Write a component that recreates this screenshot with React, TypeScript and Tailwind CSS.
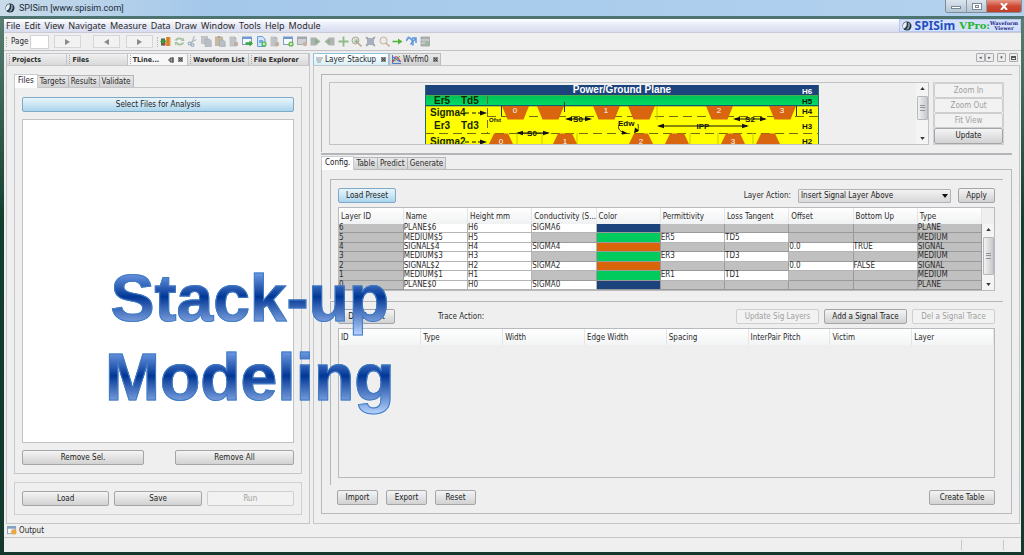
import React from 'react';
import clsx from 'clsx';

const NAVY = 'bg-[#1c437c]';
const GREEN = 'bg-[#00cb5c]';
const ORANGE = 'bg-[#d9650a]';

type LayerRow = {
  cells: (string | null)[];
  color: string;
};

const layers: LayerRow[] = [
  { cells: ['6', 'PLANE$6', 'H6', 'SIGMA6', '', null, null, null, null, 'PLANE'], color: NAVY },
  { cells: ['5', 'MEDIUM$5', 'H5', null, '', 'ER5', 'TD5', null, null, 'MEDIUM'], color: GREEN },
  { cells: ['4', 'SIGNAL$4', 'H4', 'SIGMA4', '', null, null, '0.0', 'TRUE', 'SIGNAL'], color: ORANGE },
  { cells: ['3', 'MEDIUM$3', 'H3', null, '', 'ER3', 'TD3', null, null, 'MEDIUM'], color: GREEN },
  { cells: ['2', 'SIGNAL$2', 'H2', 'SIGMA2', '', null, null, '0.0', 'FALSE', 'SIGNAL'], color: ORANGE },
  { cells: ['1', 'MEDIUM$1', 'H1', null, '', 'ER1', 'TD1', null, null, 'MEDIUM'], color: GREEN },
  { cells: ['0', 'PLANE$0', 'H0', 'SIGMA0', '', null, null, null, null, 'PLANE'], color: NAVY },
];

const layerHeads = ['Layer ID', 'Name', 'Height mm', 'Conductivity (S...', 'Color', 'Permittivity', 'Loss Tangent', 'Offset', 'Bottom Up', 'Type'];
const traceHeads = ['ID', 'Type', 'Width', 'Edge Width', 'Spacing', 'InterPair Pitch', 'Victim', 'Layer'];
const menus = ['File', 'Edit', 'View', 'Navigate', 'Measure', 'Data', 'Draw', 'Window', 'Tools', 'Help', 'Module'];

function Btn({ children, className, disabled, tone = 'gray' }: { children: React.ReactNode; className?: string; disabled?: boolean; tone?: 'gray' | 'blue' }) {
  return (
    <button
      type="button"
      disabled={disabled}
      className={clsx(
        'flex h-[15px] items-center justify-center whitespace-nowrap rounded-[2px] border',
        disabled && 'border-[#cfcfcf] bg-[#f2f2f2] text-[#a0a0a0]',
        !disabled && tone === 'gray' && 'border-[#a3a5a8] bg-gradient-to-b from-[#f4f4f4] to-[#d2d2d2] text-[#222]',
        !disabled && tone === 'blue' && 'border-[#7fa9c6] bg-gradient-to-b from-[#e9f5fb] via-[#cbe6f4] to-[#a9d5ec] text-[#222]',
        className,
      )}
    >
      {children}
    </button>
  );
}

function Logo({ className }: { className?: string }) {
  return (
    <svg viewBox="0 0 12 12" className={className} aria-hidden="true">
      <circle cx="6" cy="6" r="5.4" fill="#26333f" />
      <path d="M5.4 1.2A5 5 0 0 0 2 9.2C4.6 8 6.6 5 5.4 1.2Z" fill="#e6edf2" />
      <path d="M7 1.2c1.2 3.6.2 7-2.8 9.200A5 5 0 0 0 7 1.200Z" fill="#5a80a8" />
      <path d="M8.200 2.400C9 5 8.200 8 6.600 10" stroke="#c6d4e0" strokeWidth=".8" fill="none" />
    </svg>
  );
}

function Icon({ children }: { children: React.ReactNode }) {
  return (
    <button type="button" className="size-[11px]">
      <svg viewBox="0 0 11 11" className="block size-[11px]" aria-hidden="true">{children}</svg>
    </button>
  );
}

const windowShape = (
  <>
    <rect x=".5" y="1" width="9" height="7.500" fill="#f6fafd" stroke="#7d9cc0" />
    <rect x=".5" y="1" width="9" height="2" fill="#6c9ad2" />
  </>
);

const grayDoc = (
  <>
    <path d="M1.500 .5h5l2 2v8h-7Z" fill="#bfc3c8" />
    <path d="M6.500 .5l2 2h-2Z" fill="#9ea4ab" />
    <circle cx="8" cy="8" r="2.200" fill="#c3ada0" />
  </>
);

function ToolIcons() {
  return (
    <div className="flex w-[271px] items-center justify-between">
      <Icon>
        <rect x="6" y="1" width="4.500" height="9" fill="#e09a3c" />
        <rect x="7.500" y="1" width="1" height="9" fill="#b86a28" />
        <rect x="1" y="2.500" width="4" height="7" fill="#5a5f55" />
        <path d="M0 5.500l4-3v2h2v2H4v2Z" fill="#3c9a3c" />
        <rect x="3.500" y="7" width="2" height="2.500" fill="#c83c28" />
      </Icon>
      <Icon>
        <path d="M1.500 4.500C3 2 6.500 2 8 3.500" stroke="#a4c4a0" strokeWidth="1.800" fill="none" />
        <path d="M7 5l3.500 0-1-3.500Z" fill="#a4c4a0" />
        <path d="M9.500 6.500C8 9 4.500 9 3 7.500" stroke="#a4c4a0" strokeWidth="1.800" fill="none" />
        <path d="M4 6H.5l1 3.500Z" fill="#a4c4a0" />
      </Icon>
      <Icon>
        <path d="M7.500 0L4.500 7M9.500 3.500L3 7" stroke="#b4bcc4" strokeWidth="1.300" fill="none" />
        <circle cx="2.500" cy="7.500" r="1.400" fill="none" stroke="#9cb0c4" strokeWidth="1.200" />
        <circle cx="5.500" cy="9" r="1.400" fill="none" stroke="#9cb0c4" strokeWidth="1.200" />
      </Icon>
      <Icon>
        <rect x=".5" y=".5" width="6" height="7" fill="#c3c7cc" stroke="#a9aeb4" strokeWidth=".6" />
        <path d="M4 3h4.500l1.800 1.800v5.700H4Z" fill="#b9bfc8" stroke="#9fa6b0" strokeWidth=".6" />
      </Icon>
      <Icon>
        <rect x=".5" y="1" width="7" height="8.500" fill="#c9b79e" stroke="#b5a58e" strokeWidth=".6" />
        <rect x="2.500" y="0" width="3" height="1.800" fill="#a5a5a5" />
        <path d="M4.500 4h4l1.800 1.800v4.700H4.500Z" fill="#b9bfc8" stroke="#9fa6b0" strokeWidth=".6" />
      </Icon>
      <Icon>{grayDoc}</Icon>
      <Icon>
        {windowShape}
        <path d="M3.500 6.300h4V4.500l3.500 3-3.500 3V8.800h-4Z" fill="#3aa63a" />
      </Icon>
      <Icon>
        <path d="M1.500 .5h5l2.500 2.500v7.500H1.500Z" fill="#cfe4fa" stroke="#5b93d8" strokeWidth=".9" />
        <rect x="3" y="4" width="4" height="3" fill="#78aee8" />
        <circle cx="8" cy="8" r="2.600" fill="#45b045" />
        <path d="M8 6.500v3M6.500 8h3" stroke="#fff" strokeWidth=".9" />
      </Icon>
      <Icon>{grayDoc}</Icon>
      <Icon>
        {windowShape}
        <circle cx="8" cy="8" r="2.600" fill="#56b23c" />
        <path d="M8 6.500v3M6.500 8h3" stroke="#fff" strokeWidth=".9" />
      </Icon>
      <Icon>
        <rect x=".5" y="1" width="9" height="7.500" fill="#ced0d3" stroke="#a7aab0" />
        <rect x=".5" y="1" width="9" height="2" fill="#a3a8b0" />
        <circle cx="8" cy="8" r="2.200" fill="#c8b4a4" />
      </Icon>
      <Icon>
        <path d="M.5 1.500H6l4.500 4L6 9.500H.5Z" fill="#aab4ac" />
        <path d="M5 3l4 2.500L5 8Z" fill="#88b088" />
      </Icon>
      <Icon>
        <path d="M10.500 1.500H5l-4.500 4 4.500 4h5.500Z" fill="#b0b4b4" />
        <path d="M6 3L2 5.500 6 8Z" fill="#90b090" />
      </Icon>
      <Icon>
        <path d="M5.500 .5v10M.5 5.500h10" stroke="#8fbc8c" strokeWidth="1.800" />
      </Icon>
      <Icon>
        <circle cx="4.500" cy="4.500" r="3.500" fill="#d8e0d8" stroke="#b0a894" />
        <path d="M7 7l3.500 3.500" stroke="#c8a88c" strokeWidth="1.600" />
        <path d="M5.500 3.500v4M3.500 5.500h4" stroke="#8fb48c" strokeWidth="1.400" />
      </Icon>
      <Icon>
        <rect x="2" y="2" width="7" height="7" fill="#a7b0bc" />
        <path d="M.5 .5l3 1-2 2ZM10.500 .5l-3 1 2 2ZM.5 10.500l3-1-2-2ZM10.500 10.500l-3-1 2-2Z" fill="#9aa2ae" />
      </Icon>
      <Icon>
        <circle cx="4.500" cy="4.500" r="3.500" fill="#ecebe8" stroke="#c0b2a4" />
        <path d="M7 7l3.500 3.500" stroke="#cfae96" strokeWidth="1.600" />
      </Icon>
      <Icon>
        <path d="M.5 4.700h5.500V2.500l4.500 3-4.500 3V6.300H.5Z" fill="#4fb43c" />
      </Icon>
      <Icon>
        <path d="M0 5L2.500 1.500 6 3.500 7 9.500" stroke="#6f9fde" strokeWidth="2" fill="none" />
        <path d="M10 2L4.500 8.500M6 2h4v5" stroke="#5f96dc" strokeWidth="1.500" fill="none" />
      </Icon>
      <Icon>
        <rect x="1" y="1" width="8.500" height="9" fill="#b0b3b6" stroke="#94989c" strokeWidth=".7" />
        <path d="M1 4h8.500M1 7h4" stroke="#e4e4e4" strokeWidth=".8" />
        <circle cx="7.500" cy="7.500" r="2.300" fill="#9cb89a" />
      </Icon>
    </div>
  );
}

function Grip() {
  return <span className="mr-[2px] h-[9px] w-0 border-l border-dotted border-[#a8a8a8]" />;
}

function Cross() {
  return (
    <svg viewBox="0 0 5 5" className="size-[5px] shrink-0" aria-hidden="true">
      <rect width="5" height="5" fill="#8a8a8a" />
      <path d="M1 1l3 3M4 1L1 4" stroke="#444" strokeWidth="1" />
    </svg>
  );
}

function SubTabs({ items, className }: { items: string[]; className?: string }) {
  return (
    <div className={clsx('relative z-10 -mb-px flex items-end', className)} role="tablist">
      {items.map((t, i) => (
        <button
          key={t}
          type="button"
          role="tab"
          aria-selected={i === 0}
          className={clsx(
            'whitespace-nowrap border',
            i === 0
              ? 'h-[14px] border-b-0 border-[#c9ccd2] bg-white px-[3px] pb-px text-[#222]'
              : 'mb-px h-[12px] border-b-0 border-l-0 border-[#b4b6ba] bg-gradient-to-b from-[#e8e8e8] to-[#d3d3d3] px-[2px] leading-[11px]',
          )}
        >
          {t}
        </button>
      ))}
    </div>
  );
}

function LeftPanel() {
  const tab = 'flex h-full min-w-0 flex-1 items-center whitespace-nowrap border-r border-[#c2c4c8] bg-gradient-to-b from-[#f0f0f0] to-[#d9d9d9] pl-[2px] text-[7px] font-bold';
  return (
    <section className="flex w-[304px] shrink-0 flex-col border border-[#c3c6cb]">
      <div className="flex h-[12px] shrink-0 border-b border-[#c3c6cb]" role="tablist">
        <button type="button" role="tab" className={tab}><Grip />Projects</button>
        <button type="button" role="tab" className={tab}><Grip />Files</button>
        <div className="flex min-w-0 flex-1 items-center border-r border-[#c2c4c8] bg-[#f7f7f7] pl-[2px] text-[7px] font-bold">
          <Grip />
          <button type="button" role="tab" className="mr-auto">TLine...</button>
          <svg viewBox="0 0 6 6" className="mr-1 size-[6px]" aria-hidden="true">
            <path d="M2 1h3v4H2ZM0 3h2M5 0v6" stroke="#555" fill="#999" />
          </svg>
          <span className="mr-1"><Cross /></span>
        </div>
        <button type="button" role="tab" className={tab}><Grip />Waveform List</button>
        <button type="button" role="tab" className={tab}><Grip />File Explorer</button>
      </div>

      <div className="flex flex-1 flex-col px-[7px] pb-[8px] pt-[8px]">
        <SubTabs items={['Files', 'Targets', 'Results', 'Validate']} />
        <div className="flex flex-1 flex-col border border-[#c3c6cb] px-[7px] pb-[8px] pt-[9px]">
          <Btn tone="blue">Select Files for Analysis</Btn>
          <ul className="mt-[7px] flex-1 border border-[#c0c2c6] bg-white" aria-label="Selected files" />
          <div className="mt-[7px] flex justify-between">
            <Btn className="w-[122px]">Remove Sel.</Btn>
            <Btn className="w-[119px]">Remove All</Btn>
          </div>
        </div>
        <div className="mt-[8px] flex gap-[5px] border border-[#cdd0d4] px-[7px] py-[8px]">
          <Btn className="flex-1">Load</Btn>
          <Btn className="flex-1">Save</Btn>
          <Btn className="flex-1" disabled>Run</Btn>
        </div>
      </div>
    </section>
  );
}

const topTraces: [number, string][] = [[77, '0'], [112, ''], [168, '1'], [203, ''], [281, '2'], [344, '3']];
const lowTraces: [number, string][] = [[64, '0'], [128, '1'], [204, '2'], [240, ''], [296, '3'], [331, '']];

function DoubleArrow({ x1, x2, y }: { x1: number; x2: number; y: number }) {
  return (
    <g fill="#111" stroke="none">
      <path d={`M${x1 + 2} ${y}H${x2 - 2}`} stroke="#111" strokeWidth="1" />
      <path d={`M${x1} ${y}l7-2.200v4.400Z`} />
      <path d={`M${x2} ${y}l-7-2.200v4.400Z`} />
    </g>
  );
}

function StackDiagram() {
  return (
    <svg viewBox="0 0 394 59" className="block h-[59px] w-[394px] shrink-0 font-['Liberation_Sans',sans-serif] font-bold" role="img" aria-label="Layer stackup cross-section">
      <defs>
        <linearGradient id="dielectric" x1="0" y1="0" x2="0" y2="1">
          <stop offset="0" stopColor="#00bf56" />
          <stop offset="1" stopColor="#00dc64" />
        </linearGradient>
      </defs>
      <rect width="394" height="59" fill="#ffff00" />
      <rect width="394" height="10.500" fill="#1c437c" />
      <rect y="10.500" width="394" height="9.500" fill="url(#dielectric)" />
      <rect y="20" width="394" height="1.300" fill="#145a6c" />
      <path d="M.5 0v59M393.500 0v59" stroke="#2d6a6a" />
      <g stroke="#6f6f10" strokeWidth="1">
        <path d="M62 31.500H394M0 48.500H394" strokeDasharray="9 5" />
        <path d="M62.500 11v38" strokeDasharray="8 4" />
        <path d="M76.500 21v10M139.500 17v10M371.500 21v10" stroke="#333" />
        <path d="M92 48v11M117 48v11M152 48v11M265 48v11M293 48v11M328 48v11M232 21v14" stroke="#c8c800" />
      </g>
      {topTraces.map(([x, label]) => (
        <g key={x}>
          <path d={`M${x} 21h27l-5.500 13.500h-16Z`} fill="#d9650f" />
          <text x={x + 13} y="28" textAnchor="middle" fontSize="8" fontWeight="400" fill="#fff">{label}</text>
        </g>
      ))}
      {lowTraces.map(([x, label]) => (
        <g key={x}>
          <path d={`M${x + 5} 48.500h14l5 10.500h-24Z`} fill="#d9650f" />
          <text x={x + 12} y="59" textAnchor="middle" fontSize="8" fontWeight="400" fill="#fff">{label}</text>
        </g>
      ))}
      <DoubleArrow x1={140} x2={167} y={34} />
      <DoubleArrow x1={91} x2={125} y={48} />
      <DoubleArrow x1={308} x2={342} y={34} />
      <DoubleArrow x1={232} x2={324} y={41} />
      <path d="M40 28h4m3 0h4m2 0h4M40 57h4m3 0h4m2 0h4" stroke="#111" />
      <path d="M62 28l-7-2.500v5ZM62 57l-7-2.500v5Z" fill="#111" />
      <path d="M194 40c-2 4 2 7 6 8M213 39c1 4 0 6-1 8" stroke="#111" fill="none" strokeWidth=".8" />
      <path d="M203 48.500l-6-3v4ZM209 48.500l1-6 4 3Z" fill="#111" />
      <g fontSize="10" fill="#142800">
        <text x="9" y="18.500">Er5</text>
        <text x="36" y="18.500">Td5</text>
        <text x="5" y="30.500">Sigma4</text>
        <text x="9" y="43.500">Er3</text>
        <text x="36" y="43.500">Td3</text>
        <text x="5" y="59.500">Sigma2</text>
      </g>
      <text x="197" y="8" textAnchor="middle" fontSize="10" fill="#fff">Power/Ground Plane</text>
      <g fontSize="8" fill="#111">
        <text x="377" y="9" fill="#fff">H6</text>
        <text x="377" y="19">H5</text>
        <text x="377" y="29">H4</text>
        <text x="377" y="44">H3</text>
        <text x="377" y="59">H2</text>
        <text x="153" y="37" textAnchor="middle">S0</text>
        <text x="107" y="51" textAnchor="middle">S0</text>
        <text x="325" y="37" textAnchor="middle">S2</text>
        <text x="278" y="44" textAnchor="middle">IPP</text>
        <text x="193" y="41">Edw</text>
        <text x="64" y="37" fontSize="6">Ofst</text>
      </g>
    </svg>
  );
}

function Scrollbar({ thumb }: { thumb: string }) {
  return (
    <div className="flex w-[12px] shrink-0 flex-col items-center bg-[#f4f4f4] py-px">
      <svg viewBox="0 0 6 4" className="my-[3px] h-[3px] w-[5px]" aria-hidden="true"><path d="M0 4l3-4 3 4Z" fill="#333" /></svg>
      <div className={clsx('mx-auto mt-[3px] flex w-[11px] items-center justify-center rounded-[1px] border border-[#b4b7bb] bg-gradient-to-r from-[#f2f2f2] to-[#c8c9cb]', thumb)}>
        <span className="h-[6px] w-[5px] border-y border-[#8f9296]"><span className="mt-[1px] block h-px bg-[#8f9296]" /></span>
      </div>
      <svg viewBox="0 0 6 4" className="mb-[3px] mt-auto h-[3px] w-[5px]" aria-hidden="true"><path d="M0 0l3 4 3-4Z" fill="#333" /></svg>
    </div>
  );
}

function PreviewPane() {
  return (
    <div className="flex border-l border-t border-[#b3b5b9] pb-[7px] pl-[7px] pr-[8px] pt-[7px]">
      <div className="flex h-[63px] min-w-0 flex-1 border border-[#bfc2c6]">
        <div className="flex min-w-0 flex-1 justify-center overflow-hidden pr-[3px] pt-[2px]">
          <StackDiagram />
        </div>
        <Scrollbar thumb="h-[24px]" />
      </div>
      <div className="ml-[4px] flex w-[71px] flex-col border border-[#cdd0d4]">
        <Btn disabled className="h-[15px]">Zoom In</Btn>
        <Btn disabled className="h-[15px]">Zoom Out</Btn>
        <Btn disabled className="h-[15px]">Fit View</Btn>
        <Btn className="h-[16px]">Update</Btn>
      </div>
    </div>
  );
}

function LayerTable() {
  return (
    <div className="mt-[4px] flex border border-[#b7babf]">
      <div className="min-w-0 flex-1">
        <table className="h-[82px] w-full table-fixed border-collapse text-left">
          <thead>
            <tr className="h-[16px] bg-gradient-to-b from-white to-[#f0f1f2]">
              {layerHeads.map((h) => (
                <th key={h} className="whitespace-nowrap border-r border-[#e3e5e8] p-0 pl-[2px] pt-[2px] font-normal">{h}</th>
              ))}
            </tr>
          </thead>
          <tbody>
            {layers.map((row) => (
              <tr key={row.cells[0]}>
                {row.cells.map((c, i) => (
                  <td
                    key={i}
                    className={clsx(
                      'border-b border-r p-0 leading-[8px]',
                      i === 4
                        ? clsx(row.color, 'border-[#9a9a9a]')
                        : c === null || i === 0 || i === 9
                          ? 'border-[#9a9a9a] bg-[#c0c0c0]'
                          : 'border-[#b4b4b4] bg-white',
                    )}
                  >
                    {c}
                  </td>
                ))}
              </tr>
            ))}
          </tbody>
        </table>
      </div>
      <div className="flex pt-[16px]"><Scrollbar thumb="h-[38px]" /></div>
    </div>
  );
}

function ConfigPane() {
  return (
    <div className="flex flex-1 flex-col border border-[#b7babf] pb-[8px] pl-[8px] pr-[8px] pt-[9px]">
      <div className="border-l border-t border-[#b3b5b9] pb-[8px] pl-[7px] pr-[8px] pt-[8px]">
        <div className="flex items-center">
          <Btn tone="blue" className="w-[58px]">Load Preset</Btn>
          <label htmlFor="layer-action" className="ml-auto mr-[7px]">Layer Action:</label>
          <div className="relative mr-[7px] w-[153px]">
            <select id="layer-action" className="block h-[14px] w-full appearance-none rounded-[1px] border border-[#b1b3b6] bg-gradient-to-b from-[#f2f2f2] to-[#d8d8d8] pl-[2px] leading-[11px] text-[#222]">
              <option>Insert Signal Layer Above</option>
            </select>
            <svg viewBox="0 0 6 4" className="pointer-events-none absolute right-[3px] top-[5px] h-[4px] w-[6px]" aria-hidden="true">
              <path d="M0 0h6L3 4Z" fill="#111" />
            </svg>
          </div>
          <Btn className="w-[37px]">Apply</Btn>
        </div>
        <LayerTable />
      </div>

      <div className="mt-[2px] flex flex-1 flex-col border-l border-t border-[#b3b5b9] pb-[7px] pl-[7px] pr-[8px] pt-[7px]">
        <div className="flex items-center gap-[5px]">
          <Btn className="w-[57px]">Del Preset</Btn>
          <span className="ml-[38px] mr-auto">Trace Action:</span>
          <Btn disabled className="w-[83px]">Update Sig Layers</Btn>
          <Btn className="w-[83px]">Add a Signal Trace</Btn>
          <Btn disabled className="w-[83px]">Del a Signal Trace</Btn>
        </div>
        <div className="mt-[4px] flex-1 border border-[#b7babf]">
          <table className="w-full table-fixed border-collapse text-left">
            <thead>
              <tr className="h-[16px] bg-gradient-to-b from-white to-[#f3f4f5]">
                {traceHeads.map((h) => (
                  <th key={h} className="border-r border-[#e3e5e8] p-0 pl-[2px] pt-[2px] font-normal">{h}</th>
                ))}
              </tr>
            </thead>
          </table>
        </div>
      </div>

      <div className="mt-[5px] flex gap-[8px] pl-[7px] pr-[8px]">
        <Btn className="w-[41px]">Import</Btn>
        <Btn className="w-[41px]">Export</Btn>
        <Btn className="w-[41px]">Reset</Btn>
        <Btn className="ml-auto w-[66px]">Create Table</Btn>
      </div>
    </div>
  );
}

function Editor() {
  const nav = 'flex h-[9px] items-center justify-center rounded-[1px] border border-[#a9abae] bg-[#ececec] text-[5px] leading-none text-[#444]';
  return (
    <section className="flex min-w-0 flex-1 flex-col">
      <div className="flex h-[12px] shrink-0">
        <div className="flex w-[76px] items-center border border-b-0 border-[#8fc3dd] bg-gradient-to-b from-white to-[#d8eff8] px-[2px]">
          <svg viewBox="0 0 7 6" className="mr-[2px] h-[6px] w-[7px]" aria-hidden="true"><path d="M0 1h7M0 3h6M1 5h4" stroke="#8f9aa3" /></svg>
          <button type="button" className="mr-auto whitespace-nowrap">Layer Stackup</button>
          <Cross />
        </div>
        <div className="flex w-[52px] items-center border border-b-0 border-[#b9bbbf] bg-gradient-to-b from-[#eaeaea] to-[#cfcfcf] px-[2px]">
          <svg viewBox="0 0 9 9" className="mr-[2px] size-[9px]" aria-hidden="true">
            <path d="M.5 0v8.500H9" stroke="#4a7fc4" fill="none" />
            <path d="M1 7C3 0 5 0 8.500 7" stroke="#d8344a" strokeWidth="1.200" fill="none" />
            <path d="M1 2c3 0 4 5 7.500 4" stroke="#3c78d0" strokeWidth="1.200" fill="none" />
            <path d="M2 6l3-2 3-3" stroke="#4aaa5a" fill="none" />
          </svg>
          <button type="button" className="mr-auto">Wvfm0</button>
          <Cross />
        </div>
        <div className="ml-auto flex gap-[3px] pr-[2px]">
          <div className="flex">
            <button type="button" aria-label="Previous tab" className={clsx(nav, 'w-[9px]')}>◂</button>
            <button type="button" aria-label="Next tab" className={clsx(nav, 'w-[9px]')}>▸</button>
          </div>
          <button type="button" aria-label="Tab list" className={clsx(nav, 'w-[9px]')}>▾</button>
          <button type="button" aria-label="Maximize" className={clsx(nav, 'w-[9px]')}>
            <span className="h-[4px] w-[5px] border border-t-2 border-[#555]" />
          </button>
        </div>
      </div>
      <div className="flex flex-1 flex-col border border-[#c3c6cb] px-[7px] pb-[9px] pt-[8px]">
        <PreviewPane />
        <div className="mt-[1px] flex flex-1 flex-col border-t-2 border-[#b3b5b9] pt-[1px]">
          <SubTabs items={['Config.', 'Table', 'Predict', 'Generate']} />
          <ConfigPane />
        </div>
      </div>
    </section>
  );
}

export default function App() {
  return (
    <div className="relative flex min-h-screen flex-col bg-gradient-to-b from-[#5f8578] via-[#123e2e] via-40% to-[#16382c] pb-[3px] font-['DejaVu_Sans_Condensed','DejaVu_Sans',sans-serif] text-[8px] leading-[10px] text-[#2b2b2b]">
      <header className="flex h-[16px] shrink-0 items-start bg-gradient-to-r from-[#c9dbe9] via-[#a4c8ea] via-20% to-[#b3d2ef]">
        <div className="flex h-[16px] items-center pl-[5px] font-['Roboto',sans-serif] text-[9px] text-[#1c2a36]">
          <Logo className="mr-[4px] size-[10px]" />
          SPISim [www.spisim.com]
        </div>
        <div className="ml-auto mr-[2px] flex h-[13px] overflow-hidden rounded-b-[3px] border border-t-0 border-[#7e8c9a]">
          <button type="button" aria-label="Minimize" className="flex w-[21px] items-end justify-center border-r border-[#8b99a7] bg-gradient-to-b from-[#dbe5ee] to-[#b5c5d4] pb-[3px]">
            <span className="h-[3px] w-[10px] border border-[#7b8894] bg-white" />
          </button>
          <button type="button" aria-label="Maximize" className="flex w-[20px] items-center justify-center border-r border-[#8b99a7] bg-gradient-to-b from-[#dbe5ee] to-[#b5c5d4]">
            <span className="flex h-[7px] w-[10px] items-center justify-center border border-[#7b8894] bg-white"><span className="h-[3px] w-[4px] border border-[#7b8894]" /></span>
          </button>
          <button type="button" aria-label="Close" className="flex w-[34px] items-center justify-center bg-gradient-to-b from-[#e49a8a] via-[#cf4a34] to-[#c23c28]">
            <svg viewBox="0 0 8 7" className="h-[7px] w-[8px]" aria-hidden="true"><path d="M1 0l6 7M7 0L1 7" stroke="#fff" strokeWidth="2" /></svg>
          </button>
        </div>
      </header>
      <div className="h-[3px] shrink-0 bg-[#4d7470]" />

      <div className="ml-[4px] mr-[3px] flex flex-1 flex-col bg-[#efefef]">
        <nav className="flex h-[14px] shrink-0 items-center justify-between border-b border-[#c8cad4] bg-gradient-to-b from-white via-[#e6e9f6] to-[#d8dcef]">
          <ul className="flex gap-[4px] pl-[2px] font-['Noto_Sans',sans-serif] text-[9px]">
            {menus.map((m) => (
              <li key={m}><button type="button">{m}</button></li>
            ))}
          </ul>
          <div className="flex h-[13px] items-center border border-[#b5c8ee] bg-[#d5e0fa] px-[2px] font-bold">
            <Logo className="mr-[3px] size-[10px]" />
            <span className="mr-[4px] font-['Noto_Sans',sans-serif] text-[12px] text-[#1f4fc0]">SPISim</span>
            <span className="font-['DejaVu_Serif',serif] text-[10px] text-[#1fb42c]">VPro:</span>
            <span className="text-center font-['DejaVu_Serif',serif] text-[5px] leading-[5px] text-[#1c1c84]">Waveform<br />Viewer</span>
          </div>
        </nav>

        <div className="flex h-[18px] shrink-0 items-center border-b border-[#c0c2c5]">
          <span className="ml-[2px] h-[10px] border-l border-dotted border-[#b4b4b4]" />
          <label htmlFor="page" className="ml-[4px] w-[19px]">Page</label>
          <input id="page" className="h-[14px] w-[19px] border border-[#d0d2d5] bg-white" />
          <button type="button" aria-label="Go" className="ml-[5px] flex h-[13px] w-[27px] items-center justify-center border border-[#d4d6d8] bg-[#f2f2f2]">
            <svg viewBox="0 0 5 6" className="h-[6px] w-[5px]" aria-hidden="true"><path d="M0 0l5 3-5 3Z" fill="#8a8a8a" /></svg>
          </button>
          <button type="button" aria-label="Previous page" className="ml-[12px] flex h-[13px] w-[27px] items-center justify-center border border-[#d4d6d8] bg-[#f2f2f2]">
            <svg viewBox="0 0 5 6" className="h-[6px] w-[5px]" aria-hidden="true"><path d="M5 0L0 3l5 3Z" fill="#8a8a8a" /></svg>
          </button>
          <button type="button" aria-label="Next page" className="ml-[6px] flex h-[13px] w-[27px] items-center justify-center border border-[#d4d6d8] bg-[#f2f2f2]">
            <svg viewBox="0 0 5 6" className="h-[6px] w-[5px]" aria-hidden="true"><path d="M0 0l5 3-5 3Z" fill="#8a8a8a" /></svg>
          </button>
          <span className="ml-[4px] mr-[2px] h-[10px] border-l border-dotted border-[#b4b4b4]" />
          <ToolIcons />
        </div>

        <main className="flex flex-1 gap-[3px] pl-[2px] pr-[1px] pt-[2px]">
          <LeftPanel />
          <Editor />
        </main>

        <div className="flex h-[14px] shrink-0 items-center border-b border-[#c3c5c8] pl-[3px]">
          <svg viewBox="0 0 11 10" className="mr-[2px] h-[9px] w-[10px]" aria-hidden="true">
            <rect x=".5" y=".5" width="9" height="8" fill="#f2f6fa" stroke="#8a9db4" />
            <rect x=".5" y=".5" width="9" height="2.500" fill="#7f9fc8" />
            <circle cx="7.500" cy="6.500" r="3" fill="#e8a83c" />
          </svg>
          <button type="button">Output</button>
        </div>
        <footer className="flex h-[14px] shrink-0 items-center justify-end">
          <span className="h-[10px] w-[43px] border-x border-[#c6c8ca]" />
          <span className="w-[17px]" />
        </footer>
      </div>

      <h1 className="pointer-events-none absolute left-[105px] top-[259px] z-20 text-center font-['Liberation_Sans',Arial,sans-serif] text-[66px] font-bold leading-[79px] text-transparent [-webkit-text-stroke:1px_#3f7cc4]">
        <span className="block bg-gradient-to-b from-[#6f9ae4] from-[17%] via-[#003796] via-[48%] to-[#b8d3ff] to-[96%] bg-clip-text">Stack-up</span>
        <span className="block bg-gradient-to-b from-[#6f9ae4] from-[17%] via-[#003796] via-[48%] to-[#b8d3ff] to-[96%] bg-clip-text">Modeling</span>
      </h1>
    </div>
  );
}
